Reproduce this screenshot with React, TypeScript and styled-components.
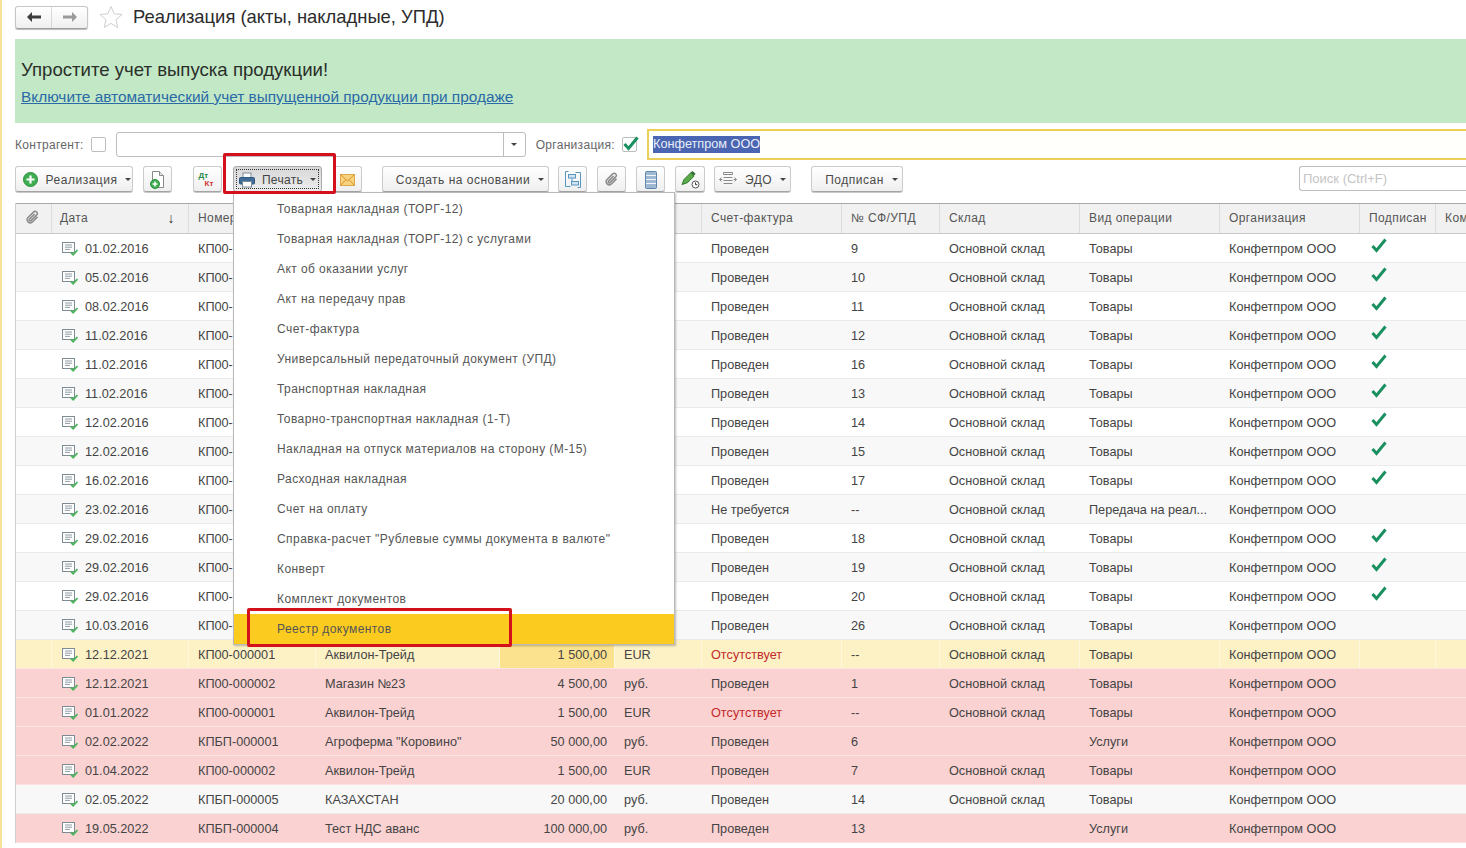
import React from 'react';
import styled, {createGlobalStyle} from 'styled-components';

const COLUMNS =
  '36px 137px 127px 184px 115px 87px 140px 98px 140px 140px 140px 76px 90px';

type Tone = 'plain' | 'alt' | 'current' | 'red';

interface IDoc {
  date: string;
  number: string;
  partner?: string;
  sum?: string;
  currency?: string;
  invoice: string;
  invoiceNo: string;
  warehouse?: string;
  operation: string;
  signed?: boolean;
  tone: Tone;
}

const early = (
  date: string,
  invoiceNo: string,
  tone: Tone,
  signed = true,
): IDoc => ({
  date,
  number: 'КП00-',
  invoice: 'Проведен',
  invoiceNo,
  warehouse: 'Основной склад',
  operation: 'Товары',
  signed,
  tone,
});

const docs: IDoc[] = [
  early('01.02.2016', '9', 'plain'),
  early('05.02.2016', '10', 'alt'),
  early('08.02.2016', '11', 'plain'),
  early('11.02.2016', '12', 'alt'),
  early('11.02.2016', '16', 'plain'),
  early('11.02.2016', '13', 'alt'),
  early('12.02.2016', '14', 'plain'),
  early('12.02.2016', '15', 'alt'),
  early('16.02.2016', '17', 'plain'),
  {
    ...early('23.02.2016', '--', 'alt', false),
    invoice: 'Не требуется',
    operation: 'Передача на реал...',
  },
  early('29.02.2016', '18', 'plain'),
  early('29.02.2016', '19', 'alt'),
  early('29.02.2016', '20', 'plain'),
  early('10.03.2016', '26', 'alt', false),
  {
    date: '12.12.2021',
    number: 'КП00-000001',
    partner: 'Аквилон-Трейд',
    sum: '1 500,00',
    currency: 'EUR',
    invoice: 'Отсутствует',
    invoiceNo: '--',
    warehouse: 'Основной склад',
    operation: 'Товары',
    tone: 'current',
  },
  {
    date: '12.12.2021',
    number: 'КП00-000002',
    partner: 'Магазин №23',
    sum: '4 500,00',
    currency: 'руб.',
    invoice: 'Проведен',
    invoiceNo: '1',
    warehouse: 'Основной склад',
    operation: 'Товары',
    tone: 'red',
  },
  {
    date: '01.01.2022',
    number: 'КП00-000001',
    partner: 'Аквилон-Трейд',
    sum: '1 500,00',
    currency: 'EUR',
    invoice: 'Отсутствует',
    invoiceNo: '--',
    warehouse: 'Основной склад',
    operation: 'Товары',
    tone: 'red',
  },
  {
    date: '02.02.2022',
    number: 'КПБП-000001',
    partner: 'Агроферма "Коровино"',
    sum: '50 000,00',
    currency: 'руб.',
    invoice: 'Проведен',
    invoiceNo: '6',
    operation: 'Услуги',
    tone: 'red',
  },
  {
    date: '01.04.2022',
    number: 'КП00-000002',
    partner: 'Аквилон-Трейд',
    sum: '1 500,00',
    currency: 'EUR',
    invoice: 'Проведен',
    invoiceNo: '7',
    warehouse: 'Основной склад',
    operation: 'Товары',
    tone: 'red',
  },
  {
    date: '02.05.2022',
    number: 'КПБП-000005',
    partner: 'КАЗАХСТАН',
    sum: '20 000,00',
    currency: 'руб.',
    invoice: 'Проведен',
    invoiceNo: '14',
    warehouse: 'Основной склад',
    operation: 'Товары',
    tone: 'alt',
  },
  {
    date: '19.05.2022',
    number: 'КПБП-000004',
    partner: 'Тест НДС аванс',
    sum: '100 000,00',
    currency: 'руб.',
    invoice: 'Проведен',
    invoiceNo: '13',
    operation: 'Услуги',
    tone: 'red',
  },
];

const printForms = [
  'Товарная накладная (ТОРГ-12)',
  'Товарная накладная (ТОРГ-12) с услугами',
  'Акт об оказании услуг',
  'Акт на передачу прав',
  'Счет-фактура',
  'Универсальный передаточный документ (УПД)',
  'Транспортная накладная',
  'Товарно-транспортная накладная (1-Т)',
  'Накладная на отпуск материалов на сторону (М-15)',
  'Расходная накладная',
  'Счет на оплату',
  'Справка-расчет "Рублевые суммы документа в валюте"',
  'Конверт',
  'Комплект документов',
  'Реестр документов',
];

const toneColors: Record<Tone, string> = {
  plain: '#ffffff',
  alt: '#f8f8f8',
  current: '#fdf1c6',
  red: '#fbd2d2',
};

const NavArrow = ({color, flip}: {color: string; flip?: boolean}) => (
  <svg
    width="14"
    height="10"
    viewBox="0 0 14 10"
    transform={flip ? 'scale(-1 1)' : undefined}
  >
    <path d="M0 5l5-5v3.4h9v3.2H5V10z" fill={color} />
  </svg>
);

const DocIcon = () => (
  <svg width="16" height="14" viewBox="0 0 16 14">
    <rect x="0.5" y="0.5" width="12" height="10" fill="#fff" stroke="#7d8b95" />
    <path d="M3 3h7M3 5.2h7M3 7.4h5" stroke="#8d9aa3" fill="none" />
    <path d="M9 10.5l2.2 2.2L15.5 8" stroke="#4cb45c" strokeWidth="1.8" fill="none" />
  </svg>
);

const ClipIcon = () => (
  <svg width="15" height="15" viewBox="0 0 24 24" fill="none" stroke="#8b8b8b" strokeWidth="2.4">
    <path d="M20 11l-8.5 8.5a5 5 0 0 1-7-7L14 3a3.4 3.4 0 0 1 4.8 4.8L9.6 17a1.7 1.7 0 0 1-2.4-2.4L15.5 6.3" />
  </svg>
);

const CheckMark = () => (
  <svg width="16" height="15" viewBox="0 0 16 15">
    <path d="M1.5 8l4 4.5L14.5 1.5" stroke="#1a8f5f" strokeWidth="3" fill="none" />
  </svg>
);

const PlusIcon = () => (
  <svg width="15" height="15" viewBox="0 0 15 15">
    <circle cx="7.5" cy="7.5" r="7" fill="#3fae52" stroke="#2b8f3e" />
    <path d="M7.5 3.5v8M3.5 7.5h8" stroke="#fff" strokeWidth="2.2" />
  </svg>
);

const NewDocIcon = () => (
  <svg width="15" height="18" viewBox="0 0 15 18">
    <path d="M2.5.5h7l4 4v12h-11z" fill="#fff" stroke="#8a8a8a" />
    <path d="M9.5.5v4h4" fill="#e4e4e4" stroke="#8a8a8a" />
    <circle cx="5" cy="13" r="4.5" fill="#3fae52" stroke="#2b8f3e" />
    <path d="M5 10.5v5M2.5 13h5" stroke="#fff" strokeWidth="1.5" />
  </svg>
);

const PrinterIcon = () => (
  <svg width="16" height="16" viewBox="0 0 16 16">
    <rect x="4" y="1" width="8" height="5" fill="#fff" stroke="#7b8a99" />
    <rect x="0.5" y="5.5" width="15" height="6.5" rx="1" fill="#3f6d97" stroke="#2f5a82" />
    <rect x="3.5" y="9.5" width="9" height="5.5" fill="#fff" stroke="#7b8a99" />
  </svg>
);

const MailIcon = () => (
  <svg width="15" height="12" viewBox="0 0 15 12">
    <rect x="0.5" y="0.5" width="14" height="11" fill="#f8d27e" stroke="#d9a94a" />
    <path d="M.5.5L7.5 7l7-6.5M.5 11.5L6 5.5M14.5 11.5L9 5.5" fill="none" stroke="#d9982f" />
  </svg>
);

const StructureIcon = () => (
  <svg width="16" height="17" viewBox="0 0 16 17" fill="none" stroke="#5a97c0">
    <path d="M3.5.5h-3v15h5M12.5 16.5h3v-15h-5" />
    <rect x="3.5" y="3.5" width="7" height="3.5" fill="#cfe3f1" />
    <rect x="6.5" y="10.5" width="7" height="3.5" fill="#cfe3f1" />
    <path d="M7 7v3.5" />
  </svg>
);

const RegisterIcon = () => (
  <svg width="12" height="18" viewBox="0 0 12 18">
    <rect x="0.5" y="0.5" width="11" height="17" rx="1" fill="#9fb9d3" stroke="#5f86ad" />
    <path d="M1 4.5h10M1 8.5h10M1 12.5h10" stroke="#f0f5fa" />
  </svg>
);

const PenClockIcon = () => (
  <svg width="19" height="19" viewBox="0 0 19 19">
    <path d="M1 14.5l2-5 6.5-6.5 3.5 3.2-6.5 6.5z" fill="#5aab48" stroke="#2e7a2e" />
    <path d="M9.5 2.5L11.5 1l3 2.8-1.5 2z" fill="#2e6b33" />
    <circle cx="14.5" cy="14.5" r="3.5" fill="#fff" stroke="#555" />
    <path d="M14.5 12.5v2.2h1.8" fill="none" stroke="#333" />
  </svg>
);

const EdoIcon = () => (
  <svg width="18" height="15" viewBox="0 0 18 15" fill="none" stroke="#8a8a8a">
    <path d="M4.5.5h9v2h-9zM4.5 5.5h9M4.5 8.5h9M4.5 11.5h9" />
    <path d="M.5 7.5h3M2.5 5.5l-2 2 2 2M14.5 7.5h3M15.5 5.5l2 2-2 2" />
  </svg>
);

const StarIcon = () => (
  <svg width="24" height="24" viewBox="0 0 24 24">
    <path
      d="M12 1.5l3.1 7.3 7.9.7-6 5.2 1.8 7.8L12 18.4l-6.8 4.1L7 14.7l-6-5.2 7.9-.7z"
      fill="#fff"
      stroke="#cfcfcf"
    />
  </svg>
);

const App = () => {
  return (
    <Page>
      <GlobalStyle />
      <TitleBar>
        <NavGroup>
          <NavButton>
            <NavArrow color="#3c3c3c" />
          </NavButton>
          <NavButton>
            <NavArrow color="#9a9a9a" flip />
          </NavButton>
        </NavGroup>
        <StarIcon />
        <Title>Реализация (акты, накладные, УПД)</Title>
      </TitleBar>

      <Banner>
        <BannerTitle>Упростите учет выпуска продукции!</BannerTitle>
        <BannerLink href="#">
          Включите автоматический учет выпущенной продукции при продаже
        </BannerLink>
      </Banner>

      <FilterRow>
        <FilterLabel>Контрагент:</FilterLabel>
        <CheckBox />
        <PartnerInput>
          <DropButton>
            <Caret />
          </DropButton>
        </PartnerInput>
        <FilterLabel>Организация:</FilterLabel>
        <CheckBox>
          <CheckMark />
        </CheckBox>
        <OrgInput>
          <Selected>Конфетпром ООО</Selected>
        </OrgInput>
      </FilterRow>

      <Toolbar>
        <ToolButton $width={118} $left={0} $shift={6}>
          <PlusIcon />
          Реализация
          <Caret />
        </ToolButton>
        <ToolButton $width={29} $left={10}>
          <NewDocIcon />
        </ToolButton>
        <ToolButton $width={29} $left={21}>
          <DebitCredit>
            <span>Дт</span>
            <span>Кт</span>
          </DebitCredit>
        </ToolButton>
        <PrintButton>
          <PrintFocus>
            <PrinterIcon />
            Печать
            <Caret />
          </PrintFocus>
        </PrintButton>
        <ToolButton $width={29} $left={11}>
          <MailIcon />
        </ToolButton>
        <ToolButton $width={167} $left={20} $shift={9}>
          Создать на основании
          <Caret />
        </ToolButton>
        <ToolButton $width={29} $left={9}>
          <StructureIcon />
        </ToolButton>
        <ToolButton $width={29} $left={10}>
          <ClipIcon />
        </ToolButton>
        <ToolButton $width={29} $left={10}>
          <RegisterIcon />
        </ToolButton>
        <ToolButton $width={30} $left={10}>
          <PenClockIcon />
        </ToolButton>
        <ToolButton $width={77} $left={9}>
          <EdoIcon />
          ЭДО
          <Caret />
        </ToolButton>
        <ToolButton $width={92} $left={20} $shift={9}>
          Подписан
          <Caret />
        </ToolButton>
        <SearchBox>Поиск (Ctrl+F)</SearchBox>
      </Toolbar>

      <TableArea>
        <HeaderRow>
          <HeaderCell>
            <ClipIcon />
          </HeaderCell>
          <DateHeader>
            Дата
            <SortArrow>↓</SortArrow>
          </DateHeader>
          <HeaderCell>Номер</HeaderCell>
          <HeaderCell />
          <HeaderCell />
          <HeaderCell />
          <HeaderCell>Счет-фактура</HeaderCell>
          <HeaderCell>№ СФ/УПД</HeaderCell>
          <HeaderCell>Склад</HeaderCell>
          <HeaderCell>Вид операции</HeaderCell>
          <HeaderCell>Организация</HeaderCell>
          <HeaderCell>Подписан</HeaderCell>
          <HeaderCell>Комментарий</HeaderCell>
        </HeaderRow>

        {docs.map((doc, index) => (
          <Row key={index} $tone={doc.tone}>
            <Cell />
            <DateCell>
              <DocIcon />
              {doc.date}
            </DateCell>
            <Cell>{doc.number}</Cell>
            <Cell>{doc.partner}</Cell>
            <SumCell $tone={doc.tone}>{doc.sum}</SumCell>
            <Cell>{doc.currency}</Cell>
            <Cell $alert={doc.invoice === 'Отсутствует'}>{doc.invoice}</Cell>
            <Cell>{doc.invoiceNo}</Cell>
            <Cell>{doc.warehouse}</Cell>
            <Cell>{doc.operation}</Cell>
            <Cell>Конфетпром ООО</Cell>
            <SignedCell>{doc.signed && <CheckMark />}</SignedCell>
            <Cell />
          </Row>
        ))}

        <PrintMenu>
          {printForms.map(form => (
            <MenuItem key={form} $active={form === 'Реестр документов'}>
              {form}
            </MenuItem>
          ))}
        </PrintMenu>
      </TableArea>

      <MarkPrint />
      <MarkRegistry />
    </Page>
  );
};

export default App;

const GlobalStyle = createGlobalStyle`
  html, body {
    margin: 0;
    background: #ffffff;
    overflow: hidden;
  }
  body {
    font-family: 'Liberation Sans', Arial, sans-serif;
  }
`;

const Page = styled.div`
  position: relative;
  width: 1466px;
  height: 848px;
  box-sizing: border-box;
  overflow: hidden;
  background: #fff;
  display: flex;
  flex-direction: column;
  border-left: 2px solid #f5e39a;
  padding-left: 13px;
`;

const TitleBar = styled.div`
  height: 39px;
  flex: none;
  display: flex;
  align-items: center;
  gap: 11px;
  padding-bottom: 5px;
  box-sizing: border-box;
`;

const NavGroup = styled.div`
  display: flex;
  width: 73px;
  height: 23px;
  border: 1px solid #c6c6c6;
  border-bottom-color: #9e9e9e;
  border-radius: 3px;
  box-sizing: border-box;
  background: linear-gradient(#ffffff, #efefef);
  box-shadow: 0 1px 1px #bbb;
`;

const NavButton = styled.div`
  flex: 1;
  display: flex;
  align-items: center;
  justify-content: center;
  & + & {
    border-left: 1px solid #d8d8d8;
  }
`;

const Title = styled.h1`
  margin: 0 0 0 -1px;
  font-size: 18.4px;
  font-weight: normal;
  color: #2c2c2c;
  white-space: nowrap;
`;

const Banner = styled.div`
  height: 84px;
  flex: none;
  background: #c3e8c6;
  box-sizing: border-box;
  padding: 20px 6px 0;
  display: flex;
  flex-direction: column;
  gap: 6px;
`;

const BannerTitle = styled.div`
  font-size: 18.6px;
  line-height: 22px;
  color: #2a2f2a;
`;

const BannerLink = styled.a`
  font-size: 15.4px;
  line-height: 20px;
  color: #2a6aa6;
  text-decoration: underline;
`;

const FilterRow = styled.div`
  margin-top: 6px;
  height: 31px;
  flex: none;
  display: flex;
  align-items: center;
`;

const FilterLabel = styled.span`
  font-size: 12px;
  color: #666;
  letter-spacing: 0.3px;
  white-space: nowrap;
`;

const CheckBox = styled.div`
  width: 15px;
  height: 15px;
  margin: 0 7px;
  border: 1px solid #bdbdbd;
  border-radius: 2px;
  box-sizing: border-box;
  background: #fff;
  display: flex;
  align-items: center;
  justify-content: center;
  flex: none;
  & > svg {
    flex: none;
    margin-left: 3px;
    margin-top: -2px;
  }
`;

const PartnerInput = styled.div`
  width: 410px;
  height: 25px;
  margin: 0 10px 0 3px;
  border: 1px solid #bdbdbd;
  border-radius: 3px;
  box-sizing: border-box;
  display: flex;
  justify-content: flex-end;
  flex: none;
`;

const DropButton = styled.div`
  width: 21px;
  border-left: 1px solid #bdbdbd;
  display: flex;
  align-items: center;
  justify-content: center;
`;

const Caret = styled.span`
  display: inline-block;
  width: 0;
  height: 0;
  border-left: 3px solid transparent;
  border-right: 3px solid transparent;
  border-top: 3px solid #444;
  flex: none;
`;

const OrgInput = styled.div`
  flex: 1;
  margin-left: 3px;
  height: 31px;
  border: 2px solid #eccf58;
  border-right: none;
  box-sizing: border-box;
  display: flex;
  align-items: center;
  padding-left: 4px;
  background: #fffffb;
`;

const Selected = styled.span`
  background: #4a66b2;
  color: #e9edf8;
  font-size: 12.7px;
  line-height: 17px;
`;

const Toolbar = styled.div`
  margin-top: 6px;
  height: 26px;
  flex: none;
  display: flex;
  align-items: stretch;
`;

const ToolButton = styled.div<{$width: number; $left: number; $shift?: number}>`
  width: ${p => p.$width}px;
  margin-left: ${p => p.$left}px;
  flex: none;
  box-sizing: border-box;
  padding-top: 1px;
  padding-left: ${p => p.$shift ?? 0}px;
  border: 1px solid #cbcbcb;
  border-bottom-color: #a3a3a3;
  border-radius: 3px;
  background: linear-gradient(#ffffff, #efefef);
  box-shadow: 0 1px 0 #c9c9c9;
  display: flex;
  align-items: center;
  justify-content: center;
  gap: 8px;
  font-size: 12px;
  letter-spacing: 0.5px;
  color: #4a4a4a;
  white-space: nowrap;
`;

const PrintButton = styled.div`
  width: 89px;
  margin-left: 11px;
  flex: none;
  box-sizing: border-box;
  border: 1px solid #a8a8a8;
  border-radius: 3px;
  background: linear-gradient(#d8d8d8, #ececec);
  padding: 2px;
  display: flex;
  font-size: 12px;
  letter-spacing: 0.3px;
  color: #444;
`;

const PrintFocus = styled.div`
  flex: 1;
  padding-top: 1px;
  border: 1px dotted #333;
  display: flex;
  align-items: center;
  justify-content: center;
  gap: 7px;
`;

const DebitCredit = styled.div`
  display: flex;
  flex-direction: column;
  width: 18px;
  font-size: 8px;
  font-weight: bold;
  line-height: 8px;
  letter-spacing: 0;
  span:first-child {
    color: #2a8a4a;
  }
  span:last-child {
    color: #cf3434;
    padding-left: 6px;
  }
`;

const SearchBox = styled.div`
  margin-left: auto;
  width: 167px;
  height: 25px;
  box-sizing: border-box;
  border: 1px solid #bdbdbd;
  border-right: none;
  border-radius: 3px 0 0 3px;
  padding-left: 3px;
  font-size: 13px;
  line-height: 24px;
  color: #c4c4c4;
`;

const TableArea = styled.div`
  position: relative;
  margin-top: 11px;
  flex: none;
  border-left: 1px solid #cfcfcf;
  width: max-content;
`;

const HeaderRow = styled.div`
  display: grid;
  grid-template-columns: ${COLUMNS};
  height: 31px;
  box-sizing: border-box;
  border-top: 1px solid #a8a8a8;
  border-bottom: 1px solid #c9c9c9;
  background: #f1f1f1;
`;

const HeaderCell = styled.div`
  display: flex;
  align-items: center;
  padding: 0 9px 2px;
  border-right: 1px solid #dcdcdc;
  font-size: 12px;
  letter-spacing: 0.4px;
  color: #555;
  white-space: nowrap;
  overflow: hidden;
`;

const DateHeader = styled(HeaderCell)`
  justify-content: space-between;
  padding-left: 8px;
  padding-right: 13px;
`;

const SortArrow = styled.span`
  font-size: 14px;
  color: #333;
`;

const Row = styled.div<{$tone: Tone}>`
  display: grid;
  grid-template-columns: ${COLUMNS};
  height: 29px;
  box-sizing: border-box;
  background: ${p => toneColors[p.$tone]};
  border-bottom: 1px solid
    ${p => (p.$tone === 'plain' || p.$tone === 'alt' ? '#ebebeb' : '#fde3e3')};
  & > div {
    border-right: 1px solid
      ${p => (p.$tone === 'current' ? '#fff8df' : 'transparent')};
  }
`;

const Cell = styled.div<{$alert?: boolean}>`
  display: flex;
  align-items: center;
  padding: 2px 9px 0;
  font-size: 12.7px;
  color: ${p => (p.$alert ? '#c22a2a' : '#444')};
  white-space: nowrap;
  overflow: hidden;
`;

const DateCell = styled(Cell)`
  gap: 7px;
  padding-left: 10px;
`;

const SumCell = styled(Cell)<{$tone: Tone}>`
  justify-content: flex-end;
  padding-right: 7px;
  background: ${p => (p.$tone === 'current' ? '#fbe28f' : 'transparent')};
`;

const SignedCell = styled(Cell)`
  align-items: flex-start;
  padding-top: 4px;
  padding-left: 11px;
`;

const PrintMenu = styled.div`
  position: absolute;
  left: 217px;
  top: -11px;
  width: 442px;
  height: 453px;
  box-sizing: border-box;
  padding-top: 1px;
  background: #fff;
  border: 1px solid #b9b9b9;
  box-shadow: 1px 1px 2px rgba(0, 0, 0, 0.25);
`;

const MenuItem = styled.div<{$active: boolean}>`
  height: 30px;
  padding-left: 43px;
  display: flex;
  align-items: center;
  font-size: 12px;
  letter-spacing: 0.43px;
  color: #555;
  background: ${p => (p.$active ? '#fccb1f' : 'transparent')};
`;

const MarkPrint = styled.div`
  position: absolute;
  left: 221px;
  top: 153px;
  width: 113px;
  height: 41px;
  box-sizing: border-box;
  border: 3px solid #d3101c;
  border-radius: 2px;
`;

const MarkRegistry = styled.div`
  position: absolute;
  left: 245px;
  top: 608px;
  width: 265px;
  height: 39px;
  box-sizing: border-box;
  border: 3px solid #d3101c;
  border-radius: 2px;
`;
